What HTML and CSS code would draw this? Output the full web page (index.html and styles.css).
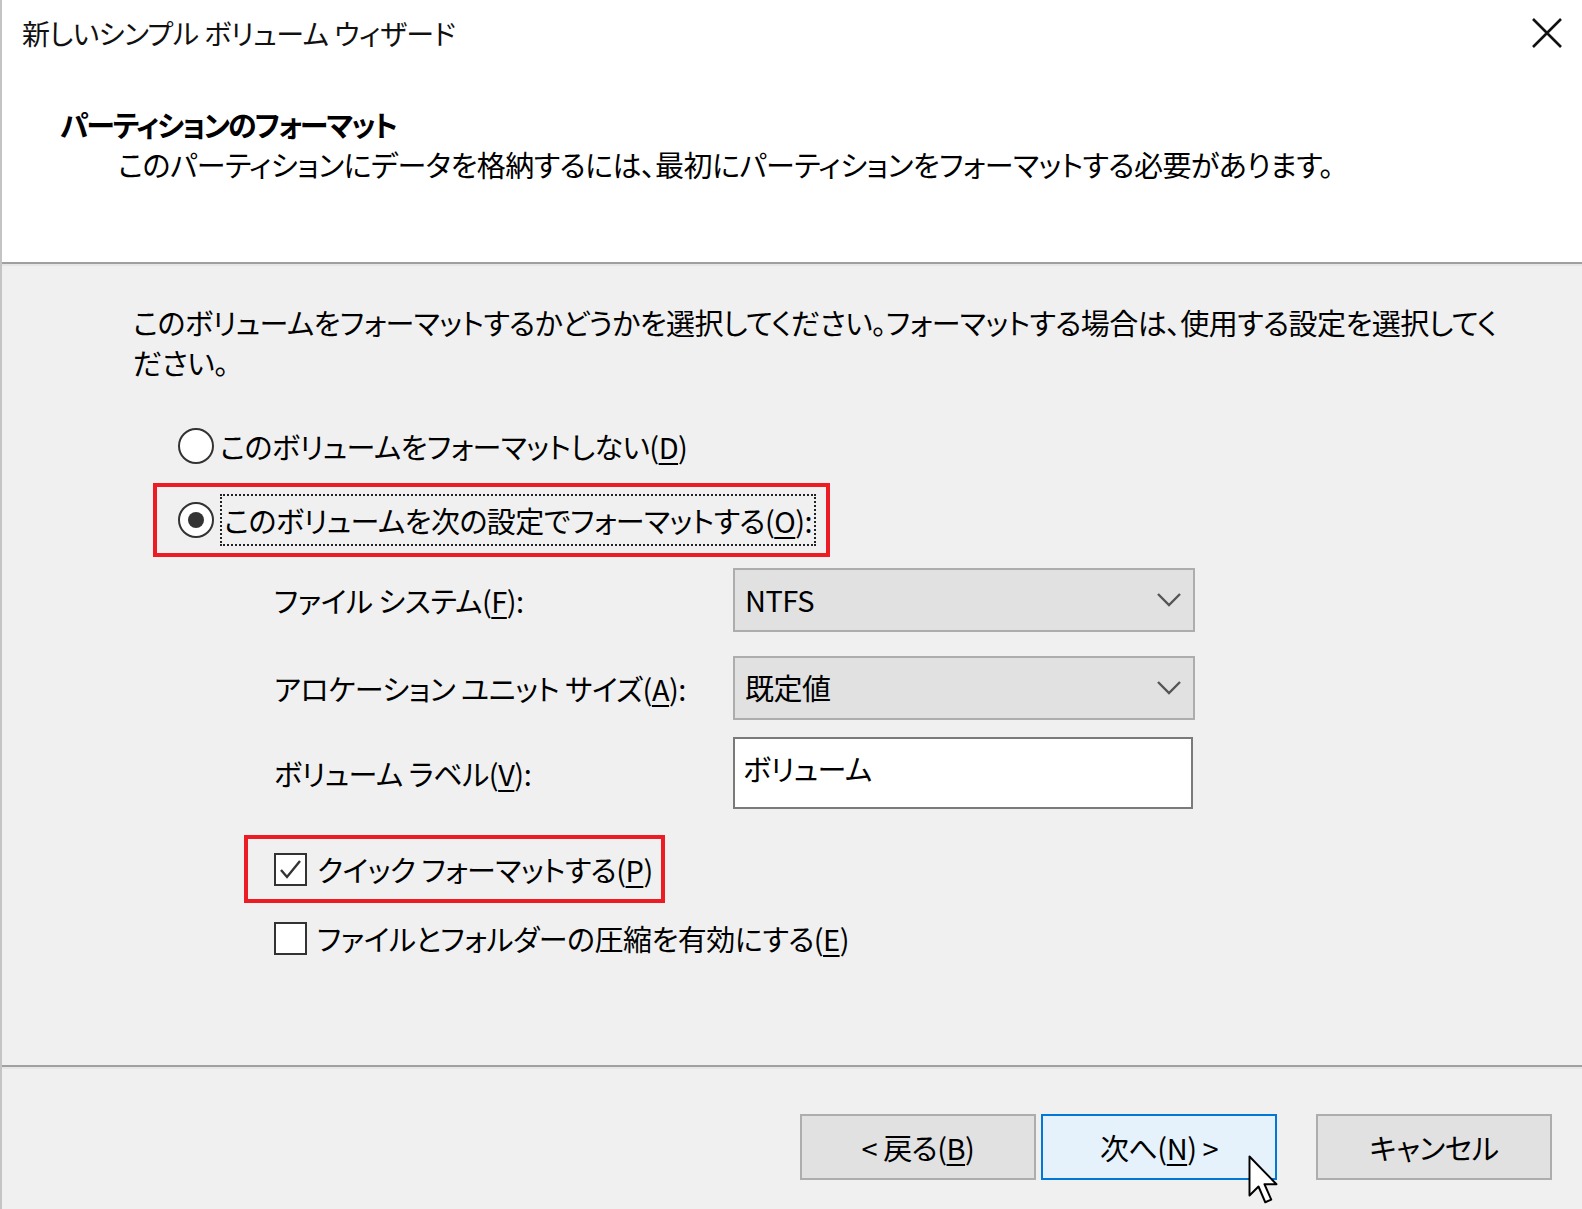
FILE: index.html
```html
<!DOCTYPE html>
<html lang="ja">
<head>
<meta charset="utf-8">
<title>新しいシンプル ボリューム ウィザード</title>
<link rel="stylesheet" href="styles.css">
</head>
<body>
<div class="dialog">
	<div class="head">
		<div class="titlebar">
			<span class="title">新しいシンプル ボリューム ウィザード</span>
			<svg class="close" width="32" height="32" viewBox="0 0 32 32"><path d="M2 2 L30 30 M30 2 L2 30" stroke="#111" stroke-width="2.6" fill="none"/></svg>
		</div>
		<div class="heading">パーティションのフォーマット</div>
		<div class="subheading">このパーティションにデータを格納するには、最初にパーティションをフォーマットする必要があります。</div>
	</div>
	<div class="sep"></div>

	<div class="content">
		<p class="intro">このボリュームをフォーマットするかどうかを選択してください。フォーマットする場合は、使用する設定を選択してく<br>ださい。</p>

		<div class="choices">
			<div class="opt">
				<span class="radio"></span>
				<span class="lbl">このボリュームをフォーマットしない(<u>D</u>)</span>
			</div>
			<div class="mark mark-radio">
				<div class="opt">
					<span class="radio on"></span>
					<span class="lbl focus">このボリュームを次の設定でフォーマットする(<u>O</u>):</span>
				</div>
			</div>
		</div>

		<div class="settings">
			<div class="field">
				<span class="flabel">ファイル システム(<u>F</u>):</span>
				<div class="combo">
					<span>NTFS</span>
					<svg width="24" height="14" viewBox="0 0 24 14"><path d="M1 1 L12 12 L23 1" stroke="#555" stroke-width="2.4" fill="none"/></svg>
				</div>
			</div>
			<div class="field">
				<span class="flabel">アロケーション ユニット サイズ(<u>A</u>):</span>
				<div class="combo">
					<span>既定値</span>
					<svg width="24" height="14" viewBox="0 0 24 14"><path d="M1 1 L12 12 L23 1" stroke="#555" stroke-width="2.4" fill="none"/></svg>
				</div>
			</div>
			<div class="field">
				<span class="flabel">ボリューム ラベル(<u>V</u>):</span>
				<div class="textbox">ボリューム</div>
			</div>

			<div class="mark mark-check">
				<div class="opt">
					<span class="check"><svg width="29" height="29" viewBox="0 0 29 29"><path d="M5 15 L11 22 L24 6" stroke="#333" stroke-width="2.4" fill="none"/></svg></span>
					<span class="lbl">クイック フォーマットする(<u>P</u>)</span>
				</div>
			</div>
			<div class="opt opt-last">
				<span class="check"></span>
				<span class="lbl">ファイルとフォルダーの圧縮を有効にする(<u>E</u>)</span>
			</div>
		</div>
	</div>

	<div class="sep"></div>
	<div class="footer">
		<button class="btn">&lt; 戻る(<u>B</u>)</button>
		<button class="btn btn-default">次へ(<u>N</u>) &gt;</button>
		<button class="btn btn-cancel">キャンセル</button>
	</div>

	<svg class="cursor" width="36" height="54" viewBox="0 0 24 36"><path d="M1 1 L1 27 L7 21 L11.5 31.5 L15.5 29.8 L11 19.5 L19 19.5 Z" fill="#fff" stroke="#000" stroke-width="1.3" stroke-linejoin="round"/></svg>
</div>
</body>
</html>
```

FILE: styles.css
```css
body {
	margin: 0;
	background: #f0f0f0;
	font-family: "Noto Sans CJK JP", "Noto Sans", sans-serif;
	font-feature-settings: "palt";
	font-size: 29px;
	letter-spacing: -0.5px;
	color: #000;
}

.dialog {
	position: relative;
	width: 1580px;
	height: 1209px;
	border-left: 2px solid #c4c4c4;
	display: flex;
	flex-direction: column;
	overflow: hidden;
}

u {
	text-decoration-thickness: 2px;
	text-underline-offset: 4px;
}

/* header */
.head {
	height: 262px;
	background: #fff;
}

.titlebar {
	height: 66px;
	display: flex;
	align-items: center;
	justify-content: space-between;
	padding-left: 20px;
	padding-right: 19px;
}

.title {
	font-size: 28px;
	color: #111;
}

.heading {
	margin-top: 38px;
	padding-left: 58px;
	line-height: 40px;
	font-weight: bold;
	letter-spacing: -2px;
}

.subheading {
	padding-left: 116px;
	line-height: 40px;
}

.sep {
	height: 2px;
	background: #a0a0a0;
	border-bottom: 2px solid #e6e6e6;
}

/* content */
.content {
	flex: 1;
	padding-top: 36px;
	padding-left: 131px;
}

.intro {
	margin: 0 0 39px 0;
	line-height: 40px;
	white-space: nowrap;
}

.choices {
	display: flex;
	flex-direction: column;
	align-items: flex-start;
}

.opt {
	height: 50px;
	display: flex;
	align-items: center;
	white-space: nowrap;
}

.choices > .opt {
	margin-left: 45px;
}

.radio {
	width: 32px;
	height: 32px;
	border: 2px solid #333;
	border-radius: 50%;
	background: #fff;
	display: flex;
	align-items: center;
	justify-content: center;
	margin-right: 6px;
	flex: none;
}

.radio.on::after {
	content: "";
	width: 16px;
	height: 16px;
	border-radius: 50%;
	background: #333;
}

.lbl {
	line-height: 44px;
}

.focus {
	border: 2px dotted #222;
	padding: 0 2px;
	line-height: 48px;
}

.mark {
	border: 4px solid #ed1c24;
	display: inline-flex;
}

.mark-radio {
	margin-top: 12px;
	margin-left: 20px;
	padding: 8px 10px 8px 21px;
}

.settings {
	margin-left: 141px;
	margin-top: 11px;
	display: flex;
	flex-direction: column;
	align-items: flex-start;
}

.field {
	display: flex;
	align-items: center;
	margin-bottom: 24px;
}

.flabel {
	width: 459px;
	white-space: nowrap;
}

.combo {
	width: 436px;
	height: 60px;
	border: 2px solid #adadad;
	background: #e1e1e1;
	display: flex;
	align-items: center;
	justify-content: space-between;
	padding: 0 12px 0 10px;
}

.combo span {
	margin-top: -2px;
}

.field:nth-child(2) {
	margin-bottom: 17px;
}

.textbox {
	width: 448px;
	height: 68px;
	border: 2px solid #7a7a7a;
	background: #fff;
	padding: 0 0 0 8px;
	line-height: 58px;
}

.field:nth-child(3) {
	margin-bottom: 26px;
}

.mark-check {
	margin-left: -30px;
	padding: 5px 8px 5px 26px;
}

.check {
	width: 29px;
	height: 29px;
	border: 2px solid #333;
	background: #fff;
	margin-right: 10px;
	flex: none;
}

.check svg {
	display: block;
}

.opt-last {
	margin-top: 10px;
}

/* footer */
.footer {
	height: 140px;
	display: flex;
	justify-content: flex-end;
	align-items: flex-start;
	padding-top: 45px;
	padding-right: 30px;
	box-sizing: border-box;
}

.btn {
	width: 236px;
	height: 66px;
	border: 2px solid #adadad;
	background: #e1e1e1;
	font-family: inherit;
	font-feature-settings: "palt";
	font-size: 29px;
	letter-spacing: inherit;
	color: #000;
	padding: 0;
	margin-left: 5px;
}

.btn-default {
	border-color: #0078d7;
	background: #e5f1fb;
}

.btn-cancel {
	margin-left: 39px;
}

.cursor {
	position: absolute;
	left: 1246px;
	top: 1155px;
}
```
